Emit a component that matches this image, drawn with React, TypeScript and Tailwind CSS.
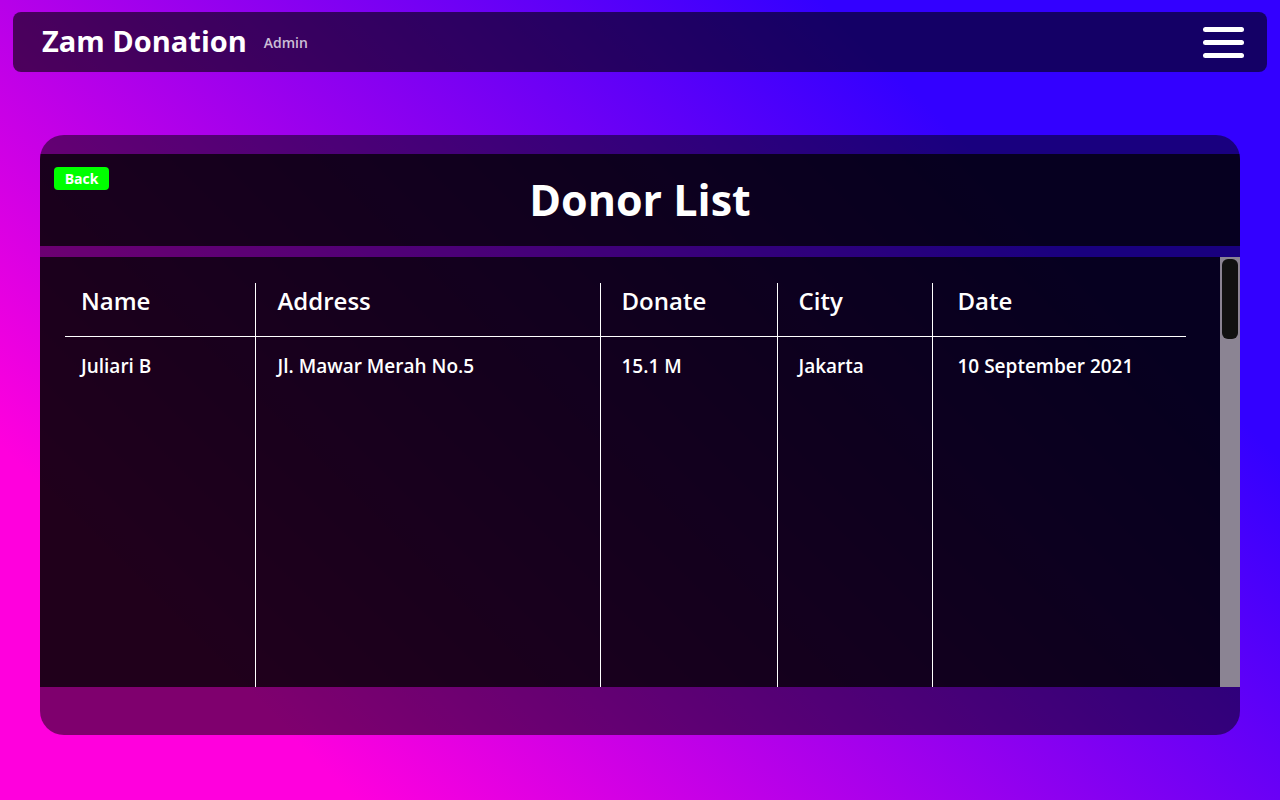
import React from 'react';

interface Donor {
  name: string;
  address: string;
  donate: string;
  city: string;
  date: string;
}

const donors: Donor[] = [
  { name: 'Juliari B', address: 'Jl. Mawar Merah No.5', donate: '15.1 M', city: 'Jakarta', date: '10 September 2021' },
];

const Navbar = () => (
  <nav className="mx-[13px] flex h-[60px] items-center justify-between rounded-lg bg-black/60 pl-[29px] pr-[23px]">
    <div className="flex items-center gap-[17px]">
      <span className="mb-[4px] text-[29px] font-bold leading-none text-white">Zam Donation</span>
      <span className="mt-[1px] text-[14px] font-semibold text-white/75">Admin</span>
    </div>
    <button className="flex flex-col gap-[8px]" aria-label="menu">
      <span className="block h-[5px] w-[41px] rounded-full bg-white" />
      <span className="block h-[5px] w-[41px] rounded-full bg-white" />
      <span className="block h-[5px] w-[41px] rounded-full bg-white" />
    </button>
  </nav>
);

const DonorTable = () => (
  <table className="w-[1121px] table-fixed border-collapse text-left text-white">
    <thead>
      <tr className="border-b border-white">
        <th className="w-[190px] pb-[19px] pl-[16px] pt-[2px] text-[24px] font-semibold leading-8">Name</th>
        <th className="w-[345px] border-l border-white pb-[19px] pl-[22px] pt-[2px] text-[24px] font-semibold leading-8">Address</th>
        <th className="w-[177px] border-l border-white pb-[19px] pl-[21px] pt-[2px] text-[24px] font-semibold leading-8">Donate</th>
        <th className="w-[155px] border-l border-white pb-[19px] pl-[21px] pt-[2px] text-[24px] font-semibold leading-8">City</th>
        <th className="w-[254px] border-l border-white pb-[19px] pl-[25px] pt-[2px] text-[24px] font-semibold leading-8">Date</th>
      </tr>
    </thead>
    <tbody>
      {donors.map(d => (
        <tr key={d.name} className="align-top text-[19px] font-semibold leading-7">
          <td className="pl-[16px] pt-[15px]">{d.name}</td>
          <td className="border-l border-white pl-[22px] pt-[15px]">{d.address}</td>
          <td className="border-l border-white pl-[21px] pt-[15px]">{d.donate}</td>
          <td className="border-l border-white pl-[21px] pt-[15px]">{d.city}</td>
          <td className="border-l border-white pl-[25px] pt-[15px]">{d.date}</td>
        </tr>
      ))}
      {/* empty space below the rows keeps the column rules running */}
      <tr className="h-[1800px]">
        <td />
        <td className="border-l border-white" />
        <td className="border-l border-white" />
        <td className="border-l border-white" />
        <td className="border-l border-white" />
      </tr>
    </tbody>
  </table>
);

export default function App() {
  return (
    <div className="min-h-screen w-full bg-[linear-gradient(45deg,#ff00dd_17%,#3300ff_78%)] pt-3 font-['Open_Sans','Noto_Sans',sans-serif]">
      <Navbar />

      <main className="mx-10 mt-[63px] flex h-[600px] flex-col overflow-hidden rounded-3xl bg-black/50 pb-[48px] pt-[19px]">
        <header className="relative flex h-[92px] items-center justify-center bg-black/75">
          <button className="absolute left-[14px] top-[13px] flex h-[23px] w-[55px] items-center justify-center rounded bg-[#00ff00] text-[14px] font-bold text-white">
            Back
          </button>
          <h1 className="text-[43px] font-bold text-white">Donor List</h1>
        </header>

        <section className="mt-[11px] flex h-[430px] bg-black/75">
          <div className="flex-1 overflow-hidden pl-[25px] pt-[26px]">
            <DonorTable />
          </div>
          {/* scrollbar */}
          <div className="w-5 bg-[#8b8493] px-[2px] pt-[2px]">
            <div className="h-20 rounded-md bg-[#111111]" />
          </div>
        </section>
      </main>
    </div>
  );
}
